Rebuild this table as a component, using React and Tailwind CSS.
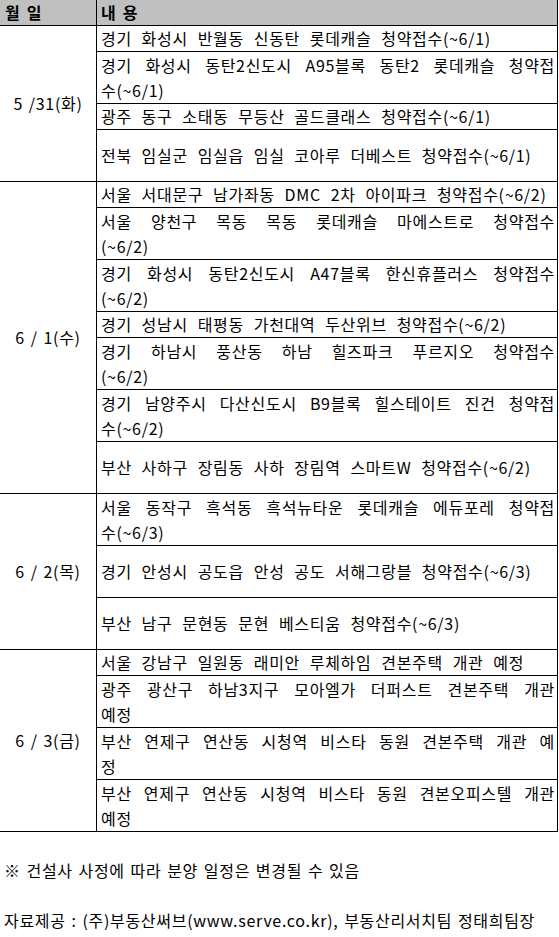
import React from "react";

const J = ({ children }) => (
  <span className="block whitespace-nowrap text-justify [text-align-last:justify] [word-spacing:0px]">{children}</span>
);
const L = ({ children }) => <span className="block whitespace-nowrap [word-spacing:5.5px]">{children}</span>;

const groups = [
  {
    date: "5 /31(화)",
    items: [
      { h: "h-[26px]", lines: [["l", "경기 화성시 반월동 신동탄 롯데캐슬 청약접수(~6/1)"]] },
      { h: "h-[52px]", lines: [["j", "경기 화성시 동탄2신도시 A95블록 동탄2 롯데캐슬 청약접"], ["l", "수(~6/1)"]] },
      { h: "h-[26px]", lines: [["l", "광주 동구 소태동 무등산 골드클래스 청약접수(~6/1)"]] },
      { h: "h-[52px]", lines: [["l", "전북 임실군 임실읍 임실 코아루 더베스트 청약접수(~6/1)"]] },
    ],
  },
  {
    date: "6 / 1(수)",
    items: [
      { h: "h-[26px]", lines: [["l", "서울 서대문구 남가좌동 DMC 2차 아이파크 청약접수(~6/2)"]] },
      { h: "h-[52px]", lines: [["j", "서울 양천구 목동 목동 롯데캐슬 마에스트로 청약접수"], ["l", "(~6/2)"]] },
      { h: "h-[52px]", lines: [["j", "경기 화성시 동탄2신도시 A47블록 한신휴플러스 청약접수"], ["l", "(~6/2)"]] },
      { h: "h-[26px]", lines: [["l", "경기 성남시 태평동 가천대역 두산위브 청약접수(~6/2)"]] },
      { h: "h-[52px]", lines: [["j", "경기 하남시 풍산동 하남 힐즈파크 푸르지오 청약접수"], ["l", "(~6/2)"]] },
      { h: "h-[52px]", lines: [["j", "경기 남양주시 다산신도시 B9블록 힐스테이트 진건 청약접"], ["l", "수(~6/2)"]] },
      { h: "h-[52px]", lines: [["l", "부산 사하구 장림동 사하 장림역 스마트W 청약접수(~6/2)"]] },
    ],
  },
  {
    date: "6 / 2(목)",
    items: [
      { h: "h-[52px]", lines: [["j", "서울 동작구 흑석동 흑석뉴타운 롯데캐슬 에듀포레 청약접"], ["l", "수(~6/3)"]] },
      { h: "h-[52px]", lines: [["l", "경기 안성시 공도읍 안성 공도 서해그랑블 청약접수(~6/3)"]] },
      { h: "h-[52px]", lines: [["l", "부산 남구 문현동 문현 베스티움 청약접수(~6/3)"]] },
    ],
  },
  {
    date: "6 / 3(금)",
    items: [
      { h: "h-[26px]", lines: [["l", "서울 강남구 일원동 래미안 루체하임 견본주택 개관 예정"]] },
      { h: "h-[52px]", lines: [["j", "광주 광산구 하남3지구 모아엘가 더퍼스트 견본주택 개관"], ["l", "예정"]] },
      { h: "h-[52px]", lines: [["j", "부산 연제구 연산동 시청역 비스타 동원 견본주택 개관 예"], ["l", "정"]] },
      { h: "h-[52px]", lines: [["j", "부산 연제구 연산동 시청역 비스타 동원 견본오피스텔 개관"], ["l", "예정"]] },
    ],
  },
];

export default function App() {
  return (
    <div className="w-[559px] h-[937px] bg-white text-black font-['Noto_Sans_CJK_KR',sans-serif] text-[16px] tracking-[0.7px] leading-[25px]">
      <div className="w-[558px] border-r border-black">
        <div className="flex h-[26px] bg-[#c0c0c0] border-b border-black font-bold text-[16px] [word-spacing:2px]">
          <div className="w-[97px] shrink-0 border-r border-black pl-[5px] flex items-center">월 일</div>
          <div className="flex-1 pl-[4px] flex items-center">내 용</div>
        </div>
        {groups.map((g, gi) => (
          <div key={gi} className="flex">
            <div className="w-[97px] shrink-0 border-r border-b border-black flex items-center justify-center [word-spacing:1.5px]">
              {g.date}
            </div>
            <div className="flex-1 flex flex-col">
              {g.items.map((it, ii) => (
                <div key={ii} className={`${it.h} border-b border-black pl-[4px] pr-[2px] flex flex-col justify-center`}>
                  {it.lines.map(([t, s], li) => (t === "j" ? <J key={li}>{s}</J> : <L key={li}>{s}</L>))}
                </div>
              ))}
            </div>
          </div>
        ))}
      </div>
      <div className="pl-[4px] mt-[26px] [word-spacing:1.5px]">※ 건설사 사정에 따라 분양 일정은 변경될 수 있음</div>
      <div className="pl-[4px] mt-[25px] [word-spacing:1.5px]">자료제공 : (주)부동산써브(www.serve.co.kr), 부동산리서치팀 정태희팀장</div>
    </div>
  );
}
